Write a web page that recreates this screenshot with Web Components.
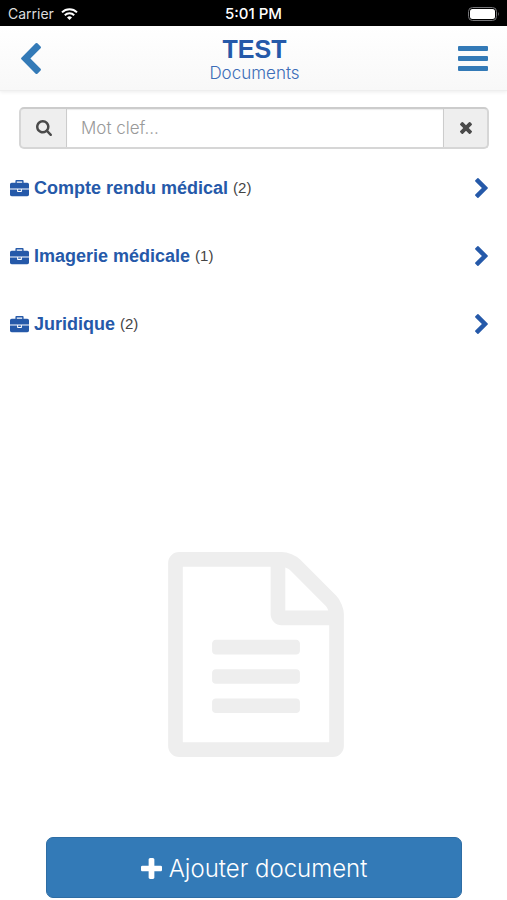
<!DOCTYPE html>
<html lang="fr">
<head>
<meta charset="utf-8">
<meta name="viewport" content="width=device-width, initial-scale=1">
<title>Documents</title>
<style>
html, body { height: 100%; margin: 0; }
body { background: #fff; color: #333; font-family: "Liberation Sans", Arial, sans-serif; }
</style>
</head>
<body>
<app-screen>
  <status-bar slot="top" carrier="Carrier" time="5:01 PM"></status-bar>
  <nav-header slot="top"><span slot="title">TEST</span><span slot="subtitle">Documents</span></nav-header>
  <search-box placeholder="Mot clef..."></search-box>
  <folder-list>
    <folder-row count="2">Compte rendu médical</folder-row>
    <folder-row count="1">Imagerie médicale</folder-row>
    <folder-row count="2">Juridique</folder-row>
  </folder-list>
  <file-mark slot="art"></file-mark>
  <add-button slot="bottom">Ajouter document</add-button>
</app-screen>
<script>
function define(name, html, setup) {
  const template = document.createElement('template');
  template.innerHTML = '<style>:host,*{box-sizing:border-box}svg{display:block;fill:currentColor}button{font:inherit;color:inherit;border:0;padding:0;margin:0;background:none;cursor:pointer}</style>' + html;
  customElements.define(name, class extends HTMLElement {
    constructor() {
      super();
      this.attachShadow({ mode: 'open' }).append(template.content.cloneNode(true));
    }
    connectedCallback() { if (setup) setup(this, this.shadowRoot); }
  });
}

define('app-screen', `
<style>
:host { display: flex; flex-direction: column; min-height: 100vh; }
main { flex: 1; display: flex; flex-direction: column; padding-top: 16px; }
.art { flex: 1; display: flex; justify-content: center; align-items: flex-end; padding: 80px 0 80px 4px; }
</style>
<slot name="top"></slot>
<main><slot></slot><div class="art"><slot name="art"></slot></div></main>
<slot name="bottom"></slot>`);

define('status-bar', `
<style>
:host { display: grid; grid-template-columns: 1fr auto 1fr; align-items: center; height: 26px; padding: 2px 8px 0; background: #000; color: #fff; font: 14px/18px Inter, sans-serif; }
.left { display: flex; align-items: center; gap: 7px; }
.carrier { color: #ddd; }
.time { font-weight: 500; font-size: 15px; }
.battery { justify-self: end; }
</style>
<div class="left"><span class="carrier"></span>
<svg width="17" height="12" viewBox="0 0 17 12" aria-hidden="true"><g fill="none" stroke="#fff" stroke-width="2"><path d="M1 4.4a10.7 10.7 0 0 1 15 0"/><path d="M3.800 7.300a6.7 6.7 0 0 1 9.400 0"/></g><path d="M8.500 12L6 9.400a3.6 3.6 0 0 1 5 0z"/></svg></div>
<span class="time"></span>
<svg class="battery" width="31" height="14" viewBox="0 0 31 14" aria-hidden="true"><rect x=".5" y=".5" width="28" height="13" rx="4" fill="none" stroke="#77777a"/><rect x="2" y="2" width="25" height="10" rx="2.5"/><path d="M30 5q1.500 2 0 4z" fill="#77777a"/></svg>`,
(el, root) => {
  root.querySelector('.carrier').textContent = el.getAttribute('carrier');
  root.querySelector('.time').textContent = el.getAttribute('time');
});

define('nav-header', `
<style>
:host { display: grid; grid-template-columns: 1fr auto 1fr; align-items: center; height: 65px; padding: 0 19px 0 21px; background: linear-gradient(#fff, #f8f8f8); border-bottom: 1px solid #eee; box-shadow: 0 1px 4px rgba(0,0,0,.08); color: #337ab7; }
header { padding-top: 4px; text-align: center; color: #2559a9; }
h1 { margin: 0; font-size: 25px; line-height: 27px; font-weight: 700; }
p { margin: 0; font: 300 17px/21px Inter, sans-serif; color: #3c6db8; }
button:last-child { justify-self: end; }
</style>
<button type="button" aria-label="Retour"><svg width="20" height="31" viewBox="346 26 1036 1612"><path transform="translate(1728 0) scale(-1 1)" d="M1363 877l-742 742q-19 19-45 19t-45-19l-166-166q-19-19-19-45t19-45l531-531-531-531q-19-19-19-45t19-45l166-166q19-19 45-19t45 19l742 742q19 19 19 45t-19 45z"/></svg></button>
<header><h1><slot name="title"></slot></h1><p><slot name="subtitle"></slot></p></header>
<button type="button" aria-label="Menu"><svg width="30" height="25" viewBox="0 0 30 25"><rect width="30" height="5" rx="1"/><rect y="10" width="30" height="5" rx="1"/><rect y="20" width="30" height="5" rx="1"/></svg></button>`);

define('search-box', `
<style>
:host { display: block; margin: 0 18px 0 19px; }
form { display: flex; height: 42px; border: 2px solid #d6d6d6; border-top-color: #ccc; border-radius: 5px; overflow: hidden; background: #eee; color: #4a4a4a; }
label, button { flex: none; display: flex; align-items: center; justify-content: center; width: 45px; }
button { width: 43px; }
input { flex: 1; min-width: 0; border: solid #ccc; border-width: 0 1px; border-radius: 0; margin: 0; padding: 0 14px; font: 300 17px/24px Inter, sans-serif; color: #555; background: #fff; box-shadow: inset 0 1px 1px rgba(0,0,0,.08); outline: 0; }
input::placeholder { color: #999; opacity: 1; }
</style>
<form role="search">
<label for="q" aria-label="Recherche"><svg width="16" height="16" viewBox="0 0 1664 1664"><path d="M1152 704q0-185-131.500-316.500t-316.500-131.500-316.500 131.500-131.500 316.500 131.500 316.500 316.500 131.500 316.500-131.500 131.500-316.500zm512 832q0 52-38 90t-90 38q-54 0-90-38l-343-342q-179 124-399 124-143 0-273.500-55.500t-225-150-150-225-55.500-273.500 55.500-273.500 150-225 225-150 273.500-55.500 273.500 55.500 225 150 150 225 55.500 273.500q0 220-124 399l343 343q37 37 37 90z"/></svg></label>
<input id="q" type="text">
<button type="button" aria-label="Effacer"><svg width="12" height="12" viewBox="302 302 1188 1188"><path d="M1490 1322q0 40-28 68l-136 136q-28 28-68 28t-68-28l-294-294-294 294q-28 28-68 28t-68-28l-136-136q-28-28-28-68t28-68l294-294-294-294q-28-28-28-68t28-68l136-136q28-28 68-28t68 28l294 294 294-294q28-28 68-28t68 28l136 136q28 28 28 68t-28 68l-294 294 294 294q28 28 28 68z" transform="translate(0 -64)"/></svg></button>
</form>`, (el, root) => {
  const input = root.querySelector('input');
  input.placeholder = el.getAttribute('placeholder');
  root.querySelector('button').onclick = () => { input.value = ''; input.focus(); };
});

define('folder-list', `<style>:host { display: block; margin-top: 5px; }</style><slot></slot>`);

define('folder-row', `
<style>
:host { display: block; }
a { display: flex; align-items: center; height: 68px; padding: 0 19px 0 10px; color: #2559a9; text-decoration: none; }
.name { margin-left: 5px; font-size: 18px; line-height: 24px; font-weight: 700; }
.count { margin-left: 5px; font-size: 15px; line-height: 24px; color: #444; }
.go { margin-left: auto; }
</style>
<a href="#"><svg width="19" height="17" viewBox="0 0 1792 1600" aria-hidden="true"><path d="M640 256h512v-128h-512v128zm1152 640v480q0 66-47 113t-113 47h-1472q-66 0-113-47t-47-113v-480h672v160q0 26 19 45t45 19h320q26 0 45-19t19-45v-160h672zm-768 0v128h-256v-128h256zm768-480v384h-1792v-384q0-66 47-113t113-47h352v-160q0-40 28-68t68-28h576q40 0 68 28t28 68v160h352q66 0 113 47t47 113z"/></svg>
<span class="name"><slot></slot></span><span class="count"></span>
<svg class="go" width="13" height="20" viewBox="346 26 1036 1612" aria-hidden="true"><path d="M1363 877l-742 742q-19 19-45 19t-45-19l-166-166q-19-19-19-45t19-45l531-531-531-531q-19-19-19-45t19-45l166-166q19-19 45-19t45 19l742 742q19 19 19 45t-19 45z"/></svg></a>`,
(el, root) => { root.querySelector('.count').textContent = '(' + el.getAttribute('count') + ')'; });

define('file-mark', `
<style>:host { display: block; color: #eee; }</style>
<svg width="176" height="205" viewBox="0 0 1536 1792" aria-hidden="true"><path d="M1468 380q28 28 48 76t20 88v1152q0 40-28 68t-68 28h-1344q-40 0-68-28t-28-68v-1600q0-40 28-68t68-28h896q40 0 88 20t76 48zm-444-244v376h376q-10-29-22-41l-313-313q-12-12-41-22zm384 1528v-1024h-416q-40 0-68-28t-28-68v-416h-768v1536h1280zm-1024-864q0-14 9-23t23-9h704q14 0 23 9t9 23v64q0 14-9 23t-23 9h-704q-14 0-23-9t-9-23v-64zm736 224q14 0 23 9t9 23v64q0 14-9 23t-23 9h-704q-14 0-23-9t-9-23v-64q0-14 9-23t23-9h704zm0 256q14 0 23 9t9 23v64q0 14-9 23t-23 9h-704q-14 0-23-9t-9-23v-64q0-14 9-23t23-9h704z"/></svg>`);

define('add-button', `
<style>
:host { display: block; padding: 0 45px 2px 46px; }
button { display: flex; align-items: center; justify-content: center; gap: 7px; width: 100%; height: 61px; padding-top: 2px; border: 1px solid #2e6da4; border-radius: 7px; background: #337ab7; color: #fff; font: 300 24px/32px Inter, sans-serif; }
</style>
<button type="button"><svg width="21" height="21" viewBox="0 0 1408 1408" aria-hidden="true"><path d="M1408 608v192q0 40-28 68t-68 28h-416v416q0 40-28 68t-68 28h-192q-40 0-68-28t-28-68v-416h-416q-40 0-68-28t-28-68v-192q0-40 28-68t68-28h416v-416q0-40 28-68t68-28h192q40 0 68 28t28 68v416h416q40 0 68 28t28 68z"/></svg><span><slot></slot></span></button>`);
</script>
</body>
</html>
